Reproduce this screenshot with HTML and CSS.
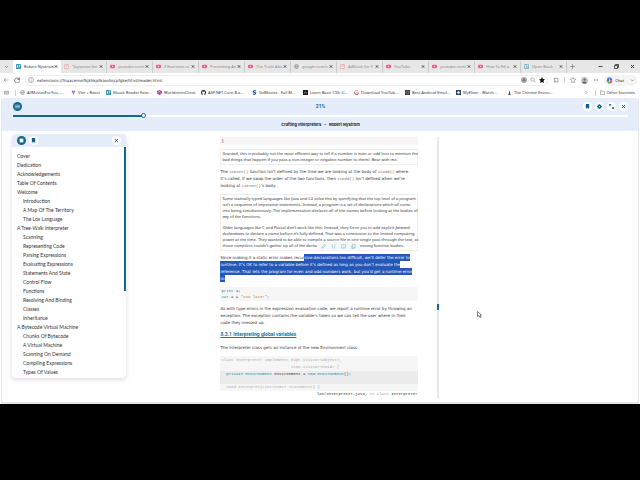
FILE: index.html
```
<!DOCTYPE html>
<html lang="en">
<head>
  <meta charset="UTF-8" />
  <meta name="viewport" content="width=device-width, initial-scale=1.0" />
  <title>Robert Nystrom - Crafting Interpreters</title>
  <link rel="stylesheet" href="styles.css">
</head>
<body>
  <!-- Shared icons -->
  <svg class="sprite" aria-hidden="true">
    <symbol id="x" viewBox="0 0 10 10"><path d="M2 2l6 6M8 2l-6 6" stroke="currentColor" stroke-width="2"/></symbol>
    <symbol id="yt" viewBox="0 0 12 12"><rect y="2" width="12" height="8" rx="2" fill="#e8638d"/><path d="M5 4l3 2-3 2z" fill="#fff"/></symbol>
    <symbol id="book" viewBox="0 0 12 12"><rect width="12" height="12" rx="1" fill="#2e8fb0"/><path d="M2 3h3v6H2zM7 2h3v4H7z" fill="#d9f3f8"/><path d="M6 8l4 2" stroke="#fff"/></symbol>
    <symbol id="globe" viewBox="0 0 12 12"><g fill="none" stroke="#777"><circle cx="6" cy="6" r="5"/><ellipse cx="6" cy="6" rx="2" ry="5"/><path d="M1 6h10"/></g></symbol>
    <symbol id="doc" viewBox="0 0 12 12"><path d="M2 1h8v10H2zM4 4h4M4 7h4" fill="#fff" stroke="#d77" stroke-width="1.2"/></symbol>
    <symbol id="mark" viewBox="0 0 12 12"><path d="M2 0h8v12L6 9l-4 3z" fill="currentColor"/></symbol>
  </svg>

  <div class="browser">
    <!-- Tabs -->
    <div class="tabs">
      <button class="tab-menu" aria-label="Tab list"><svg viewBox="0 0 10 10"><path d="M2 4l3 3 3-3" fill="none" stroke="#444"/></svg></button>
      <div class="tab active"><svg><use href="#book"/></svg><button class="name">Robert Nystrom</button><button class="close" aria-label="Close"><svg><use href="#x"/></svg></button></div>
      <div class="tab"><svg><use href="#doc"/></svg><button class="name">"Japanese Ser</button><button class="close" aria-label="Close"><svg><use href="#x"/></svg></button></div>
      <div class="tab"><svg><use href="#yt"/></svg><button class="name">youtube.com/</button><button class="close" aria-label="Close"><svg><use href="#x"/></svg></button></div>
      <div class="tab"><svg><use href="#yt"/></svg><button class="name">3 Exercises to</button><button class="close" aria-label="Close"><svg><use href="#x"/></svg></button></div>
      <div class="tab"><svg><use href="#yt"/></svg><button class="name">Presenting An</button><button class="close" aria-label="Close"><svg><use href="#x"/></svg></button></div>
      <div class="tab"><svg><use href="#yt"/></svg><button class="name">The Truth Abo</button><button class="close" aria-label="Close"><svg><use href="#x"/></svg></button></div>
      <div class="tab"><svg><use href="#globe"/></svg><button class="name">google.com/s</button><button class="close" aria-label="Close"><svg><use href="#x"/></svg></button></div>
      <div class="tab"><svg><use href="#doc"/></svg><button class="name">Adblock for Y</button><button class="close" aria-label="Close"><svg><use href="#x"/></svg></button></div>
      <div class="tab"><svg><use href="#yt"/></svg><button class="name">YouTube</button><button class="close" aria-label="Close"><svg><use href="#x"/></svg></button></div>
      <div class="tab"><svg><use href="#yt"/></svg><button class="name">youtube.com/</button><button class="close" aria-label="Close"><svg><use href="#x"/></svg></button></div>
      <div class="tab"><svg><use href="#yt"/></svg><button class="name">How To Fill a</button><button class="close" aria-label="Close"><svg><use href="#x"/></svg></button></div>
      <div class="tab"><svg class="dim"><use href="#book"/></svg><button class="name">Open Book</button><button class="close" aria-label="Close"><svg><use href="#x"/></svg></button></div>
      <button class="new-tab" aria-label="New tab"><svg viewBox="0 0 10 10"><path d="M5 0v10M0 5h10" stroke="#555"/></svg></button>
      <div class="window-btns">
        <button aria-label="Minimize"><svg viewBox="0 0 10 10"><path d="M1 5h8" stroke="#222" stroke-width="1.600"/></svg></button>
        <button aria-label="Restore"><svg viewBox="0 0 10 10"><path d="M1 3h6v6H1zM3 3V1h6v6H7" fill="none" stroke="#222" stroke-width="1.500"/></svg></button>
        <button aria-label="Close window"><svg><use href="#x"/></svg></button>
      </div>
    </div>

    <!-- Address bar -->
    <div class="address">
      <button aria-label="Back"><svg viewBox="0 0 12 12"><path d="M11 6H2M6 2L2 6l4 4" fill="none" stroke="#777"/></svg></button>
      <button aria-label="Reload"><svg viewBox="0 0 12 12"><path d="M10 4a5 5 0 1 0 1 3M11 1v4H7" fill="none" stroke="#444" stroke-width="1.300"/></svg></button>
      <div class="url">
        <svg viewBox="0 0 12 12"><circle cx="6" cy="6" r="5" fill="none" stroke="#666"/><path d="M6 5v4M6 3v1" stroke="#666"/></svg>
        <input type="text" aria-label="Address" value="extensions://fnaacemoifkjkhkpllkioofojcpfgke/html/reader.html">
        <button aria-label="Translate"><svg viewBox="0 0 12 12"><circle cx="6" cy="6" r="6" fill="#aaa"/><path d="M3 9l3-6 3 6M4 7h4" fill="none" stroke="#555"/></svg></button>
        <button aria-label="Zoom"><svg viewBox="0 0 12 12"><circle cx="5" cy="5" r="3.500" fill="none" stroke="#777"/><path d="M8 8l3 3" stroke="#777"/></svg></button>
        <button aria-label="Favorite"><svg viewBox="0 0 12 12"><path d="M6 0l2 4 4 .500-3 3 1 4.500-4-2-4 2 1-4.500-3-3L4 4z" fill="#111"/></svg></button>
      </div>
      <button aria-label="Extensions"><svg viewBox="0 0 12 12"><path d="M2 3h3a1.500 1.500 0 0 1 3 0h2v7H7V9H5v1H2V8a1.500 1.500 0 0 0 0-3z" fill="none" stroke="#555"/></svg></button>
      <span class="bar"></span>
      <button aria-label="Favorites"><svg viewBox="0 0 12 12"><path d="M6 1l1.500 3 4 .500-3 3 .500 4-3-2-3 2 .500-4-3-3 4-.500z" fill="none" stroke="#666"/></svg></button>
      <button aria-label="Profile"><svg class="avatar" viewBox="0 0 12 12"><circle cx="6" cy="6" r="6" fill="#c4c4c4"/><circle cx="6" cy="4.500" r="2" fill="#666"/><path d="M2 10q4-5 8 0-4 3-8 0" fill="#666"/></svg></button>
      <button aria-label="More"><svg viewBox="0 0 12 12"><path d="M2 6h2M5 6h2M8 6h2" stroke="#555" stroke-width="1.500"/></svg></button>
      <button class="chat"><svg class="avatar" viewBox="0 0 12 12"><path d="M3 1h4L5 7H1z" fill="#278ad8"/><path d="M7 1h2l2 5H7z" fill="#7b4fd0"/><path d="M1 7h4l2 4H4z" fill="#45b45c"/><path d="M7 6h4l-2 5H6z" fill="#e0573f"/></svg>Chat<svg class="caret" viewBox="0 0 10 10"><path d="M2 3l3 3 3-3" fill="none" stroke="#555"/></svg></button>
    </div>

    <!-- Bookmarks bar -->
    <nav class="bookmarks">
      <button aria-label="Apps"><svg viewBox="0 0 12 12"><path d="M1 3h10v7H1zM1 5h10M4 8h4" fill="none" stroke="#555"/></svg></button>
      <span class="bar"></span>
      <a href="#"><svg><use href="#globe"/></svg>AllMoviesForYou -...</a>
      <a href="#" class="short"><svg viewBox="0 0 12 12"><path d="M1 2h10L6 11z" fill="#7c55e0"/><path d="M7 0L4 6h3l-1 4 4-6H7z" fill="#ffc524"/></svg>Vite + React</a>
      <a href="#"><svg><use href="#book"/></svg>Ebook Reader Exte...</a>
      <a href="#" class="mid"><svg viewBox="0 0 12 12"><path d="M6 0l6 3-1 6-5 3-5-3-1-6z" fill="#b52ba0"/><path d="M3 9l3-7 3 7" fill="none" stroke="#fff"/></svg>WorldcitiesClient</a>
      <a href="#"><svg viewBox="0 0 12 12"><circle cx="6" cy="6" r="6" fill="#222"/><path d="M4 12V9Q1 6 3 3l2 1h2l2-1q2 3-1 6v3z" fill="#fff"/></svg>ASP.NET-Core-8-a...</a>
      <a href="#"><svg viewBox="0 0 12 12"><path d="M10 2H5L3 5l6 2-2 3H2" fill="none" stroke="#174a9d" stroke-width="2.500"/></svg>GoMovies . Full M...</a>
      <a href="#"><svg viewBox="0 0 12 12"><path d="M0 0h12v12H0z" fill="#161616"/><path d="M3 9l3-5 3 5" stroke="#fff" fill="none"/></svg>Learn Basic CSS: U...</a>
      <a href="#"><svg viewBox="0 0 12 12"><path d="M10 3a5 5 0 1 0 1 4H6" fill="none" stroke="#e66" stroke-width="2"/><path d="M2 8a5 5 0 0 0 8 1" fill="none" stroke="#468" stroke-width="2"/></svg>Download YouTub...</a>
      <a href="#"><svg viewBox="0 0 12 12"><path d="M0 0h12v12H0z" fill="#333"/><path d="M3 3h6v6H3z" fill="none" stroke="#ccc"/></svg>Best Android Emul...</a>
      <a href="#"><svg viewBox="0 0 12 12"><path d="M0 0h12v12H0z" fill="#28456f"/><circle cx="6" cy="6" r="3" fill="#fff"/></svg>MyFlixer - Watch...</a>
      <a href="#"><svg viewBox="0 0 12 12"><path d="M6 0l1 4 1 6 2 2H2l2-2 1-6z" fill="#235b83"/></svg>The Chinese Econo...</a>
      <button class="more" aria-label="More bookmarks"><svg viewBox="0 0 10 10"><path d="M3 2l3 3-3 3" fill="none" stroke="#444"/></svg></button>
      <span class="bar"></span>
      <a href="#" class="other"><svg viewBox="0 0 12 12"><path d="M1 2h4l1 2h5v7H1z" fill="none" stroke="#555"/></svg>Other favorites</a>
    </nav>

    <!-- Reader -->
    <div class="reader">
      <header class="reader-head">
        <div class="head-row">
          <button class="round solid" aria-label="Contents"><svg viewBox="0 0 12 12"><path d="M0 3h12M0 6h12M0 9h12" stroke="#cfe8f2" stroke-width="1.500"/></svg></button>
          <span class="percent">21%</span>
          <div class="head-tools">
            <button class="round" aria-label="Bookmark"><svg><use href="#mark"/></svg></button>
            <button class="round" aria-label="Settings"><svg viewBox="0 0 12 12"><circle cx="6" cy="6" r="3" fill="none" stroke="currentColor" stroke-width="3"/><path d="M6 0v2M6 10v2M0 6h2M10 6h2M2 2l1 1M9 9l1 1M10 2L9 3M3 9l-1 1" stroke="currentColor" stroke-width="2.500"/></svg></button>
            <button class="round" aria-label="Full screen"><svg viewBox="0 0 12 12"><path d="M1 5V1h4M1 1l3 3M11 7v4H7M11 11L8 8" fill="none" stroke="currentColor" stroke-width="2"/></svg></button>
            <button class="round" aria-label="Close book"><svg><use href="#x"/></svg></button>
          </div>
        </div>
        <input class="progress" type="range" min="0" max="100" value="21" aria-label="Reading progress">
        <h1>Crafting Interpreters &nbsp; – &nbsp; Robert Nystrom</h1>
      </header>

      <div class="reader-body">
        <aside class="toc">
          <div class="toc-head">
            <button class="round solid" aria-label="Chapters"><svg viewBox="0 0 12 12"><path d="M2 2h8v8H2zM2 4h8" fill="#fff" stroke="#cfe8f2"/></svg></button>
            <button class="round" aria-label="Bookmarks"><svg><use href="#mark"/></svg></button>
            <button class="round last" aria-label="Close contents"><svg><use href="#x"/></svg></button>
          </div>
          <div class="toc-scroll">
            <ul>
              <li><a href="#">Cover</a></li>
              <li><a href="#">Dedication</a></li>
              <li><a href="#">Acknowledgements</a></li>
              <li><a href="#">Table Of Contents</a></li>
              <li><a href="#">Welcome</a></li>
              <li class="sub"><a href="#">Introduction</a></li>
              <li class="sub"><a href="#">A Map Of The Territory</a></li>
              <li class="sub"><a href="#">The Lox Language</a></li>
              <li><a href="#">A Tree-Walk Interpreter</a></li>
              <li class="sub"><a href="#">Scanning</a></li>
              <li class="sub"><a href="#">Representing Code</a></li>
              <li class="sub"><a href="#">Parsing Expressions</a></li>
              <li class="sub"><a href="#">Evaluating Expressions</a></li>
              <li class="sub"><a href="#">Statements And State</a></li>
              <li class="sub"><a href="#">Control Flow</a></li>
              <li class="sub"><a href="#">Functions</a></li>
              <li class="sub"><a href="#">Resolving And Binding</a></li>
              <li class="sub"><a href="#">Classes</a></li>
              <li class="sub"><a href="#">Inheritance</a></li>
              <li><a href="#">A Bytecode Virtual Machine</a></li>
              <li class="sub"><a href="#">Chunks Of Bytecode</a></li>
              <li class="sub"><a href="#">A Virtual Machine</a></li>
              <li class="sub"><a href="#">Scanning On Demand</a></li>
              <li class="sub"><a href="#">Compiling Expressions</a></li>
              <li class="sub"><a href="#">Types Of Values</a></li>
            </ul>
            <div class="toc-bar"></div>
          </div>
        </aside>

        <main class="page">
          <pre class="code">}</pre>
          <div class="note">
            <p>Granted, this is probably not the most efficient way to tell if a number is even or odd (not to mention the<br>bad things that happen if you pass a non-integer or negative number to them). Bear with me.</p>
          </div>
          <p>The <code>isEven()</code> function isn’t defined by the time we are looking at the body of <code>isOdd()</code> where<br>it’s called. If we swap the order of the two functions, then <code>isOdd()</code> isn’t defined when we’re<br>looking at <code>isEven()</code>’s body.</p>
          <div class="note">
            <p>Some statically typed languages like Java and C# solve this by specifying that the top level of a program<br>isn’t a sequence of imperative statements. Instead, a program is a set of declarations which all come<br>into being simultaneously. The implementation declares <em>all</em> of the names before looking at the bodies of<br><em>any</em> of the functions.</p>
            <p>Older languages like C and Pascal don’t work like this. Instead, they force you to add explicit <em>forward<br>declarations</em> to declare a name before it’s fully defined. That was a concession to the limited computing<br>power at the time. They wanted to be able to compile a source file in one single pass through the text, so<br>those compilers couldn’t gather up all of the declarations first before processing function bodies.</p>
            <div class="popup">
              <button aria-label="Highlight"><svg viewBox="0 0 12 12"><path d="M2 10l1-3 6-6 2 2-6 6z" fill="none" stroke="currentColor"/></svg></button>
              <button aria-label="Underline"><svg viewBox="0 0 12 12"><path d="M3 1v7q3 4 6 0V1" fill="none" stroke="currentColor"/></svg></button>
              <button aria-label="Comment"><svg viewBox="0 0 12 12"><path d="M1 2h10v7H6l-2 2V9H1z" fill="none" stroke="currentColor"/></svg></button>
              <button aria-label="Copy"><svg viewBox="0 0 12 12"><path d="M4 1h6v7H4zM4 4H2v7h6V8" fill="none" stroke="currentColor"/></svg></button>
            </div>
          </div>
          <p>Since making it a static error makes recur<mark>sive declarations too difficult, we’ll defer the error to<br>runtime. It’s OK to refer to a variable before it’s defined as long as you don’t evaluate the<br>reference. That lets the program for even and odd numbers work, but you’d get a runtime error<br>in:</mark></p>
          <pre class="code"><b>print</b> a;
<b>var</b> a = <i>"too late!"</i>;</pre>
          <p>As with type errors in the expression evaluation code, we report a runtime error by throwing an<br>exception. The exception contains the variable’s token so we can tell the user where in their<br>code they messed up.</p>
          <h2><a href="#">8.3.1 Interpreting global variables</a></h2>
          <p>The Interpreter class gets an instance of the new Environment class.</p>
          <div class="listing">
            <pre class="context">class Interpreter implements Expr.Visitor&lt;Object&gt;,
                             Stmt.Visitor&lt;Void&gt; {</pre>
            <pre class="added">  <b>private</b> <b>Environment</b> environment = <b>new</b> <b>Environment</b>();</pre>
            <pre class="context">  void interpret(List&lt;Stmt&gt; statements) {</pre>
          </div>
          <p class="caption">lox/Interpreter.java, <span>in class</span> Interpreter</p>
        </main>

        <div class="divider"><span></span></div>
        <svg class="cursor" viewBox="0 0 10 14"><path d="M1 1v10l3-2 2 4 2-1-2-4h3z" fill="#fff" stroke="#555" stroke-width="1.500"/></svg>
      </div>
    </div>
  </div>
</body>
</html>
```
FILE: styles.css
```
* {
  margin: 0;
  padding: 0;
  box-sizing: border-box;
}

body {
  background: #000;
  min-height: 100vh;
  padding: 60px 0 76px;
  font-family: "Noto Sans", sans-serif;
  font-size: 4px;
  color: #333;
}

button,
input {
  font: inherit;
  color: inherit;
  background: none;
  border: none;
}

button {
  display: flex;
  align-items: center;
  justify-content: center;
  flex-shrink: 0;
}

a {
  color: inherit;
  text-decoration: none;
}

svg {
  width: 5px;
  height: 5px;
  flex-shrink: 0;
}

.sprite {
  position: absolute;
  width: 0;
  height: 0;
}

.browser {
  background: #fff;
  white-space: nowrap;
}

.bar {
  width: 1px;
  height: 6px;
  background: #ccc;
}

/* Tabs */
.tabs {
  display: flex;
  align-items: center;
  height: 13px;
  background: #e7e7e7;
}

.tab-menu {
  width: 13px;
}

.tab {
  display: flex;
  align-items: center;
  gap: 3px;
  flex: 0 1 46px;
  min-width: 0;
  height: 12px;
  padding: 0 3px;
  border-right: 1px solid #ccc;
  color: #888;
}

.tab.active {
  flex-basis: 48px;
  height: 13px;
  background: #fff;
  border-radius: 3px 3px 0 0;
  border-right: none;
  color: #333;
}

.tab .name {
  flex: 1;
  min-width: 0;
  justify-content: flex-start;
}

.dim {
  opacity: 0.5;
}

.close {
  color: #333;
}

.close svg {
  width: 4px;
}

.new-tab {
  margin-left: 3px;
}

.window-btns {
  display: flex;
  gap: 11px;
  margin-left: auto;
  padding-right: 5px;
}

/* Address bar */
.address {
  display: flex;
  align-items: center;
  gap: 5px;
  height: 14px;
  padding: 0 3px;
}

.address svg {
  width: 6px;
  height: 6px;
}

.url {
  flex: 1;
  display: flex;
  align-items: center;
  gap: 3px;
  height: 11px;
  padding: 0 2px;
  border: 1px solid #eee;
  border-radius: 6px;
}

.url input {
  flex: 1;
  min-width: 0;
  font-family: "DejaVu Sans", sans-serif;
}

.address .avatar {
  width: 7px;
  height: 7px;
}

.address .chat {
  gap: 2px;
  padding: 2px;
  background: #f4f4f4;
  border-radius: 5px;
  color: #222;
}

.chat .caret {
  margin-left: 4px;
  width: 5px;
  height: 5px;
}

/* Bookmarks */
.bookmarks {
  display: flex;
  align-items: center;
  height: 11px;
  padding: 0 5px 0 4px;
}

.bookmarks .bar {
  margin: 0 4px 0 6px;
}

.bookmarks a {
  display: flex;
  align-items: center;
  gap: 2px;
  flex: 0 1 51px;
}

.bookmarks .short {
  flex-basis: 35px;
}

.bookmarks .mid {
  flex-basis: 44px;
}

.bookmarks .other {
  flex-basis: auto;
}

.bookmarks .more {
  margin-left: auto;
}

/* Reader */
.reader {
  margin: 0 1px;
  border: solid #e4e6ea;
  border-width: 0 1px 2px;
}

.reader-head {
  height: 33px;
  padding: 4px 10px 0 11px;
  background: #e6edfa;
  border-radius: 3px 3px 0 0;
  color: #16688a;
}

.head-row {
  display: grid;
  grid-template-columns: 1fr auto 1fr;
  align-items: center;
}

.percent {
  font: bold 5px/7px Roboto, sans-serif;
}

.head-tools {
  display: flex;
  justify-content: flex-end;
  gap: 3px;
}

.round {
  width: 9px;
  height: 9px;
  border-radius: 50%;
  background: #fff;
  color: #0f5f82;
}

.round.solid {
  background: #16688a;
}

.progress {
  display: block;
  width: 100%;
  height: 5px;
  margin-top: 2px;
  appearance: none;
  background: linear-gradient(#16688a, #16688a) left center / 21% 2px no-repeat,
    linear-gradient(#fff, #fff) center / 100% 2px no-repeat;
}

.progress::-webkit-slider-thumb {
  appearance: none;
  width: 5px;
  height: 5px;
  border: 1px solid #16688a;
  border-radius: 50%;
  background: #fff;
}

h1 {
  margin-top: 4px;
  font: bold 4px/6px Inter, sans-serif;
  text-align: center;
  color: #222;
}

.reader-body {
  position: relative;
  display: flex;
  align-items: flex-start;
}

/* Contents panel */
.toc {
  width: 18%;
  margin: 3px 0 0 10px;
  border-radius: 4px;
  box-shadow: 0 2px 5px #ddd;
}

.toc-head {
  display: flex;
  align-items: center;
  gap: 3px;
  height: 13px;
  padding: 0 5px;
  background: #e6edfa;
  border-radius: 4px 4px 0 0;
}

.toc-head .round.last {
  margin-left: auto;
}

.toc-scroll {
  display: flex;
  justify-content: space-between;
}

ul {
  list-style: none;
  padding: 5px 0 1px 5px;
}

li {
  font: 5px/9px Lato, sans-serif;
  color: #333;
}

.sub {
  padding-left: 6px;
}

.toc-bar {
  width: 2px;
  height: 144px;
  background: #16688a;
}

/* Book page */
.page {
  width: 31%;
  margin: 6px 0 0 94px;
  font: 4px/7px "DejaVu Sans", sans-serif;
}

.page p,
.page pre {
  margin-bottom: 5px;
}

pre,
code {
  font-family: "Liberation Mono", monospace;
  font-size: 4px;
}

code {
  line-height: 1px;
  color: #777;
}

.page .code {
  margin-bottom: 4px;
  padding: 1px;
  background: #f6f6f6;
  line-height: 6px;
}

.code b,
.added b {
  font-weight: normal;
  color: #1689a0;
}

.code i {
  font-style: normal;
  color: #ab8b1c;
}

.note {
  position: relative;
  margin-bottom: 3px;
  padding: 1px;
  border: 1px solid #eee;
  font-family: "Noto Sans", sans-serif;
  line-height: 6px;
}

.note p:last-of-type {
  margin-bottom: 0;
}

.popup {
  position: absolute;
  left: 49%;
  bottom: -1px;
  display: flex;
  align-items: center;
  gap: 5px;
  height: 9px;
  padding: 0 4px;
  background: #f3f7f9;
  border-radius: 3px;
  color: #5aa5a5;
}

mark {
  padding: 1px 0;
  background: #2557b8;
  color: #fff;
}

h2 {
  margin-bottom: 6px;
  font: bold 5px/7px Roboto, sans-serif;
  color: #16789b;
}

h2 a {
  text-decoration: underline;
}

.listing {
  padding-top: 1px;
  background: #f6f6f6;
}

.listing pre {
  margin: 0;
  padding: 0 1px;
  line-height: 7px;
}

.context {
  color: #aaa;
}

.page .added {
  padding-bottom: 6px;
  background: #ebebeb;
}

.page .caption {
  margin-bottom: 4px;
  font: 4px/7px "Liberation Mono", monospace;
  text-align: right;
}

.caption span {
  color: #999;
}

.divider {
  align-self: stretch;
  width: 2px;
  margin: 6px 0 4px 3%;
  padding-top: 167px;
  background: #e6e8ef;
}

.divider span {
  display: block;
  height: 6px;
  background: #16688a;
}

.cursor {
  position: absolute;
  left: 475px;
  top: 180px;
  height: 7px;
}
```
